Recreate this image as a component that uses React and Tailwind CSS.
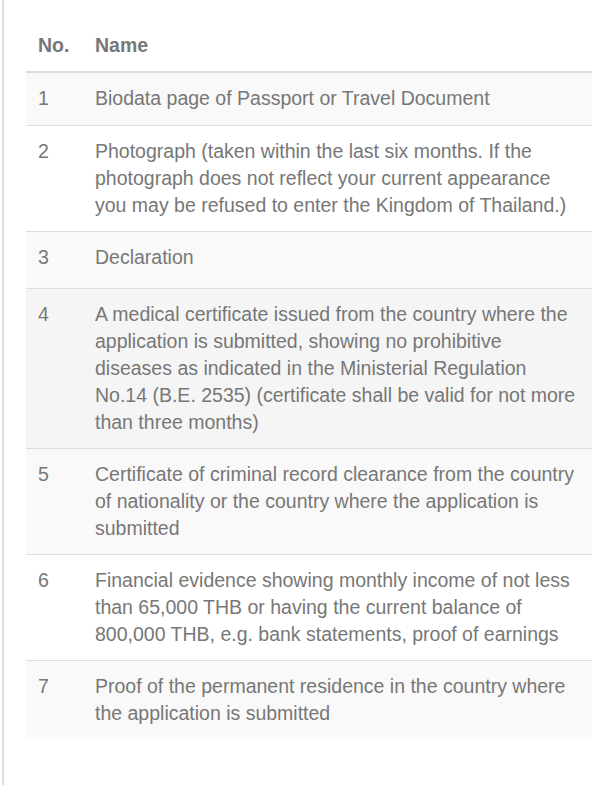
export default function App() {
  const rows = [
    ["1", "Biodata page of Passport or Travel Document"],
    ["2", "Photograph (taken within the last six months. If the photograph does not reflect your current appearance you may be refused to enter the Kingdom of Thailand.)"],
    ["3", "Declaration"],
    ["4", "A medical certificate issued from the country where the application is submitted, showing no prohibitive diseases as indicated in the Ministerial Regulation No.14 (B.E. 2535) (certificate shall be valid for not more than three months)"],
    ["5", "Certificate of criminal record clearance from the country of nationality or the country where the application is submitted"],
    ["6", "Financial evidence showing monthly income of not less than 65,000 THB or having the current balance of 800,000 THB, e.g. bank statements, proof of earnings"],
    ["7", "Proof of the permanent residence in the country where the application is submitted"],
  ];
  const bg = (i) => (i === 3 ? "bg-[#f5f5f5]" : i % 2 === 0 ? "bg-[#f9f9f9]" : "bg-white");
  const pad = (i) => (i === 0 ? "px-3 pt-3 pb-[13px]" : i === 2 ? "px-3 pt-3 pb-[17px]" : "p-3");
  return (
    <div className="min-h-screen bg-white overflow-hidden" style={{ fontFamily: '"Liberation Sans", Arial, sans-serif' }}>
      <div className="ml-[2px] min-h-screen border-l-2 border-[#dddddd] pl-[22px] pt-[20px]">
        <table className="w-[566px] border-collapse text-[19.5px] leading-[27px] text-[#777777]">
          <thead>
            <tr>
              <th className="w-[57px] border-b-2 border-[#dddddd] p-3 text-left align-bottom font-bold">No.</th>
              <th className="border-b-2 border-[#dddddd] p-3 text-left align-bottom font-bold">Name</th>
            </tr>
          </thead>
          <tbody>
            {rows.map(([n, t], i) => (
              <tr key={n} className={bg(i)}>
                <td className={pad(i) + " align-top " + (i > 0 ? "border-t border-[#dddddd]" : "")}>{n}</td>
                <td className={pad(i) + " align-top " + (i > 0 ? "border-t border-[#dddddd]" : "")}>{t}</td>
              </tr>
            ))}
          </tbody>
        </table>
      </div>
    </div>
  );
}
